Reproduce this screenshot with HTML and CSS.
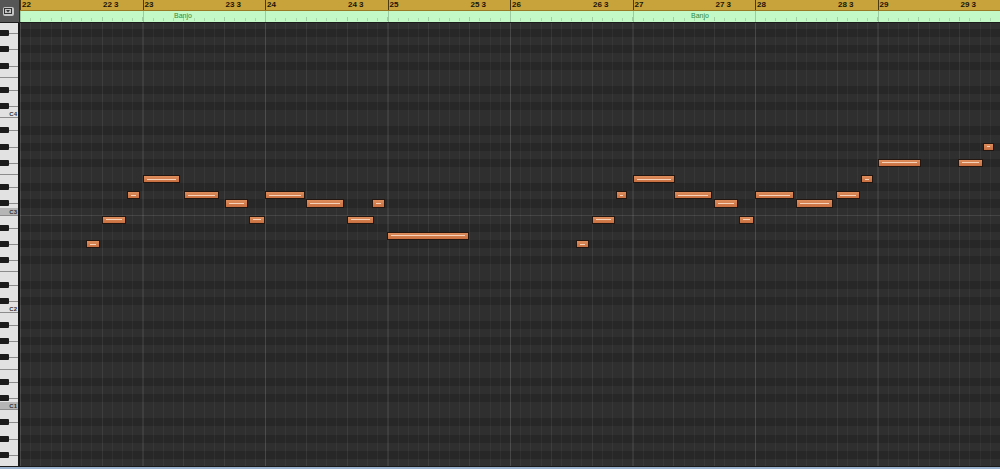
FILE: index.html
```html
<!DOCTYPE html>
<html lang="en">
<head>
    <meta charset="UTF-8">
    <title>Piano Roll - Banjo</title>
    <link rel="stylesheet" href="styles.css">
</head>
<body>

<div class="editor">
    <div class="header">
        <div class="corner">
            <div class="corner-btn">
                <svg width="8" height="6" viewBox="0 0 8 6">
                    <rect x="0.5" y="0.5" width="7" height="5" fill="none" stroke="#333" stroke-width="1"/>
                    <path d="M2 2 L6 2 L4 4.5 Z" fill="#333"/>
                </svg>
            </div>
        </div>
        <div class="timeline">
            <div class="ruler" id="ruler"></div>
            <div class="region-bar">
                <div class="region-seg">Banjo</div>
                <div class="region-seg last">Banjo</div>
            </div>
        </div>
    </div>

    <div class="body">
        <div class="keyboard">
            <div class="key-rows" id="keys"></div>
        </div>
        <div class="grid">
            <div class="grid-rows" id="rows">
                <div class="lines"></div>
                <div class="notes" id="notes"></div>
            </div>
        </div>
    </div>

    <div class="bottom-edge"></div>
</div>

<script>
// Semitone height and grid start, in px
const ROW = 8.11;
const GRID_LEFT = 20;

// Row names, from the top row (B4) downwards
const names = ['B', 'A#', 'A', 'G#', 'G', 'F#', 'F', 'E', 'D#', 'D', 'C#', 'C'];
const shaded = ['C3', 'C1'];

// Ruler: bars 22 - 29, label at bar start and beat 3
const ruler = document.getElementById('ruler');
for (let bar = 22; bar <= 29; bar++) {
    const cell = document.createElement('div');
    cell.className = 'bar';
    cell.innerHTML = `<span class="bar-main">${bar}</span><span class="bar-sub">${bar} 3</span>`;
    ruler.appendChild(cell);
}

// Keyboard and grid rows
const keys = document.getElementById('keys');
const rows = document.getElementById('rows');
for (let i = 0; i < 57; i++) {
    const name = names[i % 12];
    const octave = 4 - Math.floor(i / 12);
    const isBlack = name.includes('#');

    const key = document.createElement('div');
    key.className = 'key ' + (isBlack ? 'black' : 'white');
    if (name === 'C' || name === 'F') key.classList.add('split');
    if (name === 'C') {
        key.textContent = 'C' + octave;
        if (shaded.includes('C' + octave)) key.classList.add('shaded');
    }
    keys.appendChild(key);

    const row = document.createElement('div');
    row.className = 'row ' + (isBlack ? 'row-black' : 'row-white');
    if (name === 'C' && octave === 3) row.classList.add('row-mark');
    rows.insertBefore(row, rows.querySelector('.lines'));
}

// Notes: [x on screen, width, row index]
const notes = [
    [86, 14, 27], [102, 24, 24], [127, 13, 21], [143, 37, 19],
    [184, 35, 21], [225, 23, 22], [249, 16, 24], [265, 40, 21],
    [306, 38, 22], [347, 27, 24], [372, 13, 22], [387, 82, 26],
    [576, 13, 27], [592, 23, 24], [616, 11, 21], [633, 42, 19],
    [674, 38, 21], [714, 24, 22], [739, 15, 24], [755, 39, 21],
    [796, 37, 22], [836, 24, 21], [861, 12, 19], [878, 43, 17],
    [958, 25, 17], [983, 11, 15]
];
const layer = document.getElementById('notes');
notes.forEach(([x, w, r]) => {
    const n = document.createElement('div');
    n.className = 'note';
    n.style.left = (x - GRID_LEFT) + 'px';
    n.style.width = w + 'px';
    n.style.top = (r * ROW) + 'px';
    n.innerHTML = '<span class="velocity"></span>';
    layer.appendChild(n);
});
</script>

</body>
</html>
```

FILE: styles.css
```css
body, html {
    margin: 0;
    padding: 0;
    background-color: #2b2b2b;
    font-family: "Liberation Sans", Arial, sans-serif;
    overflow: hidden;
}
.editor {
    width: 1000px;
    height: 469px;
    display: flex;
    flex-direction: column;
    overflow: hidden;
}
.header {
    display: flex;
    height: 23px;
    flex-shrink: 0;
}
.corner {
    width: 20px;
    background-color: #565656;
    border-right: 1px solid #2a2a2a;
    border-bottom: 1px solid #1c1c1c;
    box-sizing: border-box;
    display: flex;
    align-items: center;
    justify-content: center;
}
.corner-btn {
    width: 11px;
    height: 9px;
    margin-right: 3px;
    border-radius: 2px;
    background-color: #c4c4c4;
    display: flex;
    align-items: center;
    justify-content: center;
}
.timeline {
    width: 980px;
    display: flex;
    flex-direction: column;
    overflow: hidden;
}
.ruler {
    height: 11px;
    display: flex;
    background-color: #c8a23a;
    border-bottom: 1px solid #9a7a25;
    box-sizing: border-box;
}
.bar {
    width: 122.5px;
    flex-shrink: 0;
    display: flex;
    border-left: 1px solid #4a3a12;
    box-sizing: border-box;
    font-size: 8px;
    font-weight: bold;
    line-height: 9px;
    color: #1a1408;
}
.bar-main {
    width: 66.667%;
    padding-left: 1px;
}
.bar-sub {
    flex: 1;
}
.region-bar {
    height: 12px;
    display: flex;
    overflow: hidden;
    box-sizing: border-box;
    border-bottom: 1px solid #1c1c1c;
    background:
        repeating-linear-gradient(to right, #9ccaa1 0 1px, transparent 1px 122.5px),
        repeating-linear-gradient(to right, #9fd0a4 0 1px, transparent 1px 40.833px) 0 6px / 100% 4px no-repeat,
        repeating-linear-gradient(to right, #a9d9ad 0 1px, transparent 1px 10.208px) 0 7px / 100% 3px no-repeat,
        #c3f8c7;
}
.region-seg {
    width: 517px;
    flex-shrink: 0;
    padding-left: 154px;
    box-sizing: border-box;
    font-size: 7px;
    line-height: 9px;
    color: #2f8a3c;
}
.region-seg.last {
    width: auto;
    flex: 1;
}
.body {
    flex: 1;
    display: flex;
    overflow: hidden;
}
.keyboard {
    width: 20px;
    flex-shrink: 0;
    overflow: hidden;
    background-color: #e2e2e2;
    border-right: 2px solid #161616;
    box-sizing: border-box;
}
.key-rows {
    margin-top: -2px;
    display: flex;
    flex-direction: column;
}
.key {
    height: 8.11px;
    flex-shrink: 0;
    position: relative;
    box-sizing: border-box;
    font-size: 6px;
    font-weight: bold;
    line-height: 8px;
    text-align: right;
    padding-right: 1px;
    color: #333;
}
.key.split {
    border-bottom: 1px solid #8c8c8c;
}
.key.shaded {
    background-color: #b5b5b5;
}
.key.black::before {
    content: "";
    position: absolute;
    left: 0;
    top: 1px;
    width: 9px;
    height: 6px;
    background-color: #1b1b1b;
    border-radius: 0 1px 1px 0;
}
.key.black::after {
    content: "";
    position: absolute;
    left: 9px;
    right: 0;
    top: 4px;
    height: 1px;
    background-color: #8c8c8c;
}
.grid {
    flex: 1;
    overflow: hidden;
}
.grid-rows {
    margin-top: -2px;
    display: flex;
    flex-direction: column;
    position: relative;
}
.row {
    height: 8.11px;
    flex-shrink: 0;
}
.row-white {
    background-color: #2f2f2f;
}
.row-black {
    background-color: #272727;
}
.row-mark {
    box-shadow: inset 0 -1px 0 #444;
}
.lines {
    position: absolute;
    inset: 0;
    background-image:
        repeating-linear-gradient(to right, rgba(255,255,255,0.08) 0 1px, transparent 1px 122.5px),
        repeating-linear-gradient(to right, rgba(255,255,255,0.035) 0 1px, transparent 1px 40.833px),
        repeating-linear-gradient(to right, rgba(255,255,255,0.04) 0 1px, transparent 1px 10.208px);
}
.notes {
    position: absolute;
    inset: 0;
}
.note {
    position: absolute;
    height: 8.11px;
    box-sizing: border-box;
    border: 1px solid #231510;
    background: linear-gradient(#de8d5c, #c86f40);
    display: flex;
    align-items: center;
    padding: 0 3px;
}
.velocity {
    flex: 1;
    height: 1px;
    background-color: #f7d2bb;
}
.bottom-edge {
    height: 3px;
    flex-shrink: 0;
    box-sizing: border-box;
    border-top: 1px solid #1a1a1a;
    background-color: #9bb2cf;
}
```
